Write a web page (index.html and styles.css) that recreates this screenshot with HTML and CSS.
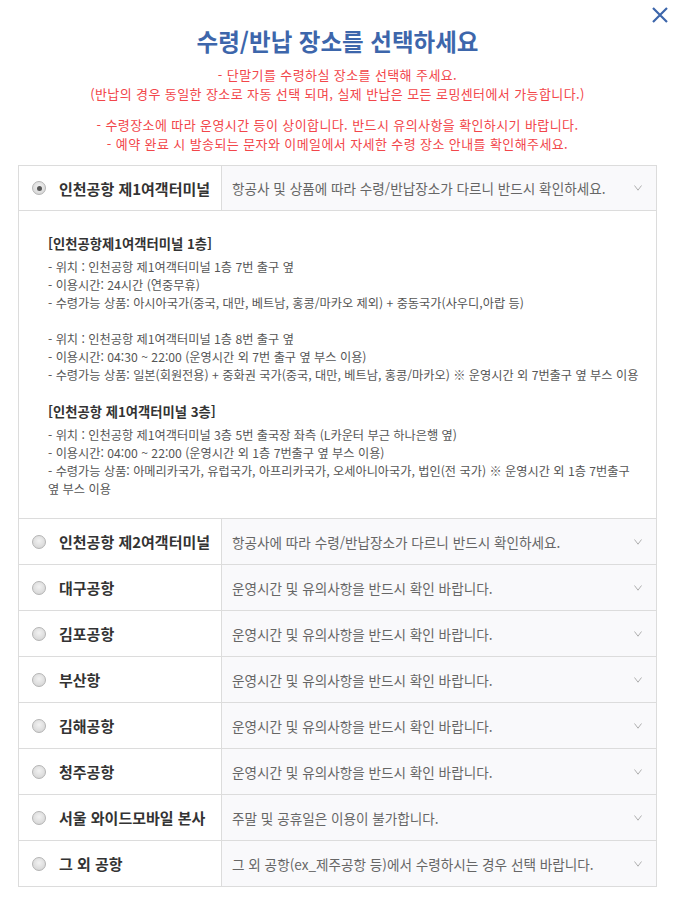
FILE: index.html
```html
<!DOCTYPE html>
<html lang="ko">
<head>
<meta charset="utf-8">
<title>수령/반납 장소 선택</title>
<link rel="stylesheet" href="styles.css">
</head>
<body>
<div class="modal">
  <button class="close" aria-label="닫기">
    <svg width="18" height="18" viewBox="0 0 18 18"><path d="M2 2 L16 16 M16 2 L2 16" stroke="#3d66ab" stroke-width="2.2" fill="none"/></svg>
  </button>
  <h1 class="title">수령/반납 장소를 선택하세요</h1>
  <div class="notice">
    <p>- 단말기를 수령하실 장소를 선택해 주세요.<br>(반납의 경우 동일한 장소로 자동 선택 되며, 실제 반납은 모든 로밍센터에서 가능합니다.)</p>
    <p>- 수령장소에 따라 운영시간 등이 상이합니다. 반드시 유의사항을 확인하시기 바랍니다.<br>- 예약 완료 시 발송되는 문자와 이메일에서 자세한 수령 장소 안내를 확인해주세요.</p>
  </div>

  <ul class="places">
    <li class="place open">
      <div class="place-head">
        <div class="place-name"><span class="radio checked"></span>인천공항 제1여객터미널</div>
        <div class="place-desc"><span>항공사 및 상품에 따라 수령/반납장소가 다르니 반드시 확인하세요.</span><svg class="chev" width="8" height="6" viewBox="0 0 8 6"><path d="M0.5 0.5 L4 5.2 L7.5 0.5" stroke="#b0b0b0" stroke-width="1" fill="none"/></svg></div>
      </div>
      <div class="place-body">
        <div class="section">
          <h3>[인천공항제1여객터미널 1층]</h3>
          <p>- 위치 : 인천공항 제1여객터미널 1층 7번 출구 옆</p>
          <p>- 이용시간: 24시간 (연중무휴)</p>
          <p>- 수령가능 상품: 아시아국가(중국, 대만, 베트남, 홍콩/마카오 제외) + 중동국가(사우디,아랍 등)</p>
        </div>
        <div class="section">
          <p>- 위치 : 인천공항 제1여객터미널 1층 8번 출구 옆</p>
          <p>- 이용시간: 04:30 ~ 22:00 (운영시간 외 7번 출구 옆 부스 이용)</p>
          <p class="nowrap">- 수령가능 상품: 일본(회원전용) + 중화권 국가(중국, 대만, 베트남, 홍콩/마카오) ※ 운영시간 외 7번출구 옆 부스 이용</p>
        </div>
        <div class="section">
          <h3>[인천공항 제1여객터미널 3층]</h3>
          <p>- 위치 : 인천공항 제1여객터미널 3층 5번 출국장 좌측 (L카운터 부근 하나은행 옆)</p>
          <p>- 이용시간: 04:00 ~ 22:00 (운영시간 외 1층 7번출구 옆 부스 이용)</p>
          <p>- 수령가능 상품: 아메리카국가, 유럽국가, 아프리카국가, 오세아니아국가, 법인(전 국가) ※ 운영시간 외 1층 7번출구<br>옆 부스 이용</p>
        </div>
      </div>
    </li>
    <li class="place">
      <div class="place-head">
        <div class="place-name"><span class="radio"></span>인천공항 제2여객터미널</div>
        <div class="place-desc"><span>항공사에 따라 수령/반납장소가 다르니 반드시 확인하세요.</span><svg class="chev" width="8" height="6" viewBox="0 0 8 6"><path d="M0.5 0.5 L4 5.2 L7.5 0.5" stroke="#b0b0b0" stroke-width="1" fill="none"/></svg></div>
      </div>
    </li>
    <li class="place">
      <div class="place-head">
        <div class="place-name"><span class="radio"></span>대구공항</div>
        <div class="place-desc"><span>운영시간 및 유의사항을 반드시 확인 바랍니다.</span><svg class="chev" width="8" height="6" viewBox="0 0 8 6"><path d="M0.5 0.5 L4 5.2 L7.5 0.5" stroke="#b0b0b0" stroke-width="1" fill="none"/></svg></div>
      </div>
    </li>
    <li class="place">
      <div class="place-head">
        <div class="place-name"><span class="radio"></span>김포공항</div>
        <div class="place-desc"><span>운영시간 및 유의사항을 반드시 확인 바랍니다.</span><svg class="chev" width="8" height="6" viewBox="0 0 8 6"><path d="M0.5 0.5 L4 5.2 L7.5 0.5" stroke="#b0b0b0" stroke-width="1" fill="none"/></svg></div>
      </div>
    </li>
    <li class="place">
      <div class="place-head">
        <div class="place-name"><span class="radio"></span>부산항</div>
        <div class="place-desc"><span>운영시간 및 유의사항을 반드시 확인 바랍니다.</span><svg class="chev" width="8" height="6" viewBox="0 0 8 6"><path d="M0.5 0.5 L4 5.2 L7.5 0.5" stroke="#b0b0b0" stroke-width="1" fill="none"/></svg></div>
      </div>
    </li>
    <li class="place">
      <div class="place-head">
        <div class="place-name"><span class="radio"></span>김해공항</div>
        <div class="place-desc"><span>운영시간 및 유의사항을 반드시 확인 바랍니다.</span><svg class="chev" width="8" height="6" viewBox="0 0 8 6"><path d="M0.5 0.5 L4 5.2 L7.5 0.5" stroke="#b0b0b0" stroke-width="1" fill="none"/></svg></div>
      </div>
    </li>
    <li class="place">
      <div class="place-head">
        <div class="place-name"><span class="radio"></span>청주공항</div>
        <div class="place-desc"><span>운영시간 및 유의사항을 반드시 확인 바랍니다.</span><svg class="chev" width="8" height="6" viewBox="0 0 8 6"><path d="M0.5 0.5 L4 5.2 L7.5 0.5" stroke="#b0b0b0" stroke-width="1" fill="none"/></svg></div>
      </div>
    </li>
    <li class="place">
      <div class="place-head">
        <div class="place-name"><span class="radio"></span>서울 와이드모바일 본사</div>
        <div class="place-desc"><span>주말 및 공휴일은 이용이 불가합니다.</span><svg class="chev" width="8" height="6" viewBox="0 0 8 6"><path d="M0.5 0.5 L4 5.2 L7.5 0.5" stroke="#b0b0b0" stroke-width="1" fill="none"/></svg></div>
      </div>
    </li>
    <li class="place">
      <div class="place-head">
        <div class="place-name"><span class="radio"></span>그 외 공항</div>
        <div class="place-desc"><span>그 외 공항(ex_제주공항 등)에서 수령하시는 경우 선택 바랍니다.</span><svg class="chev" width="8" height="6" viewBox="0 0 8 6"><path d="M0.5 0.5 L4 5.2 L7.5 0.5" stroke="#b0b0b0" stroke-width="1" fill="none"/></svg></div>
      </div>
    </li>
  </ul>
</div>
</body>
</html>
```

FILE: styles.css
```css
* { box-sizing: border-box; }

html, body {
  margin: 0;
  padding: 0;
  background: #ffffff;
}

body {
  font-family: "Noto Sans CJK KR", "Noto Sans", sans-serif;
  color: #333;
}

.modal {
  position: relative;
  width: 681px;
  padding: 26px 0 0 18px;
}

.close {
  position: absolute;
  top: 6px;
  right: 12px;
  width: 18px;
  height: 18px;
  padding: 0;
  border: 0;
  background: none;
  display: block;
}

.close svg { display: block; }

.title {
  margin: 0;
  width: 639px;
  text-align: center;
  font-size: 23.5px;
  line-height: 31px;
  font-weight: 700;
  color: #3d66ab;
}

.notice {
  width: 639px;
  margin-top: 8px;
  text-align: center;
  color: #f2464a;
  font-size: 13px;
  letter-spacing: 0.4px;
  line-height: 19px;
}

.notice p { margin: 0; }
.notice p + p { margin-top: 12px; }

.places {
  list-style: none;
  margin: 12px 0 0;
  padding: 0;
  width: 639px;
  border: 1px solid #dcdcdc;
}

.place { border-bottom: 1px solid #dcdcdc; }
.place:last-child { border-bottom: 0; }

.place-head {
  display: flex;
  height: 45px;
}

.place.open .place-head { border-bottom: 1px solid #dcdcdc; }

.place-name {
  width: 203px;
  display: flex;
  align-items: center;
  gap: 13px;
  padding-left: 13px;
  font-size: 15px;
  font-weight: 700;
  color: #333;
  border-right: 1px solid #dcdcdc;
  background: #fff;
  white-space: nowrap;
}

.radio {
  width: 14px;
  height: 14px;
  border-radius: 50%;
  border: 1px solid #b4b4b4;
  background: radial-gradient(circle at 50% 40%, #f2f2f2 0%, #dcdcdc 65%, #cbcbcb 100%);
  flex: none;
  position: relative;
}

.radio.checked::after {
  content: "";
  position: absolute;
  left: 3.5px;
  top: 3.5px;
  width: 5px;
  height: 5px;
  border-radius: 50%;
  background: #555;
}

.place-desc {
  flex: 1;
  display: flex;
  align-items: center;
  justify-content: space-between;
  padding: 0 14px 0 10px;
  background: #f9f9fb;
  font-size: 13.6px;
  color: #666;
  white-space: nowrap;
}

.chev { display: block; flex: none; }

.place-body {
  padding: 23px 8px 20px 29px;
  font-size: 12.2px;
  line-height: 18px;
  color: #555;
  word-break: keep-all;
}

.section + .section { margin-top: 18px; }

.section h3 {
  margin: 0 0 4px;
  font-size: 13.3px;
  line-height: 20px;
  font-weight: 700;
  color: #333;
}

.section p { margin: 0; }
.section p.nowrap { white-space: nowrap; }
```
